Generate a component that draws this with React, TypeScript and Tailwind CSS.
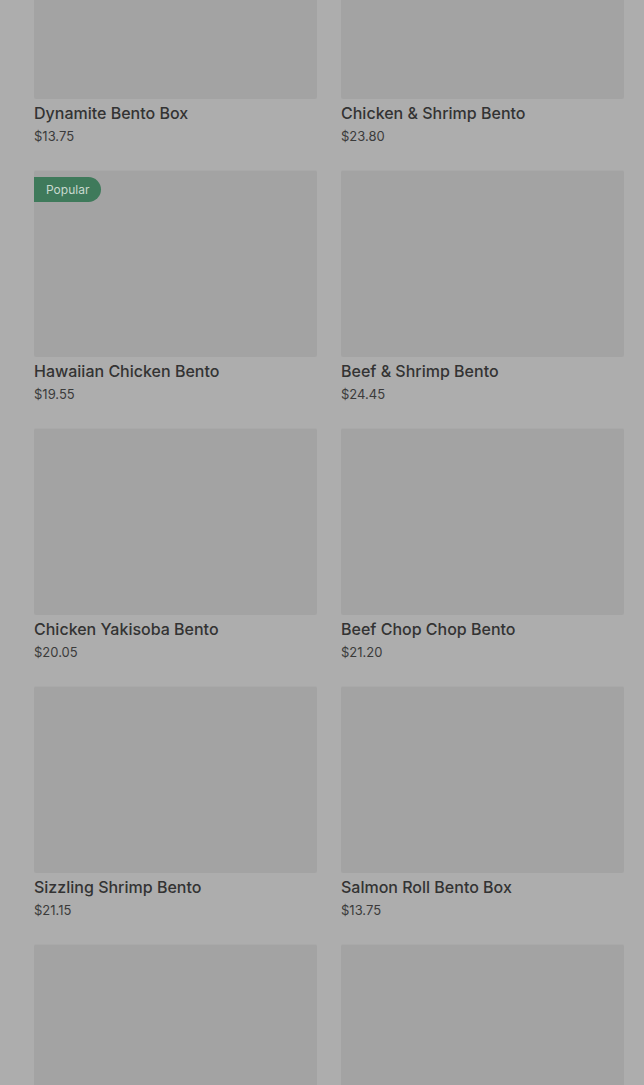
import React from 'react'

interface Item {
    name: string
    price: string
    popular?: boolean
}

const items: Item[] = [
    { name: 'Dynamite Bento Box', price: '$13.75' },
    { name: 'Chicken & Shrimp Bento', price: '$23.80' },
    { name: 'Hawaiian Chicken Bento', price: '$19.55', popular: true },
    { name: 'Beef & Shrimp Bento', price: '$24.45' },
    { name: 'Chicken Yakisoba Bento', price: '$20.05' },
    { name: 'Beef Chop Chop Bento', price: '$21.20' },
    { name: 'Sizzling Shrimp Bento', price: '$21.15' },
    { name: 'Salmon Roll Bento Box', price: '$13.75' },
    { name: '', price: '' },
    { name: '', price: '' },
]

const Card: React.FC<{ item: Item }> = ({ item }) => {
    return (
        <div className="flex flex-col">
            <div className="relative h-[187px] bg-[#a3a3a3] rounded-[2px] border-t border-[#a9a9a9]">
                {item.popular && (
                    <span className="absolute left-0 top-[6px] h-[25px] px-3 flex items-center bg-[#3f7a5b] text-[#c9d9cf] text-[12px] rounded-r-full">
                        Popular
                    </span>
                )}
            </div>
            {item.name && (
                <>
                    <p className="mt-1 text-[16px] leading-5 font-medium text-[#333333]">{item.name}</p>
                    <p className="mt-[5px] text-[13px] leading-4 text-[#3b3b3b]">{item.price}</p>
                </>
            )}
        </div>
    )
}

const App: React.FC = () => {
    return (
        <div className="h-[1085px] overflow-hidden bg-[#adadad]" style={{ fontFamily: 'Inter, "Noto Sans", sans-serif' }}>
            <div className="grid grid-cols-2 gap-x-6 gap-y-[26px] pl-[34px] pr-[20px] -mt-[88px]">
                {items.map((item, i) => (
                    <Card key={i} item={item} />
                ))}
            </div>
        </div>
    )
}

export default App
